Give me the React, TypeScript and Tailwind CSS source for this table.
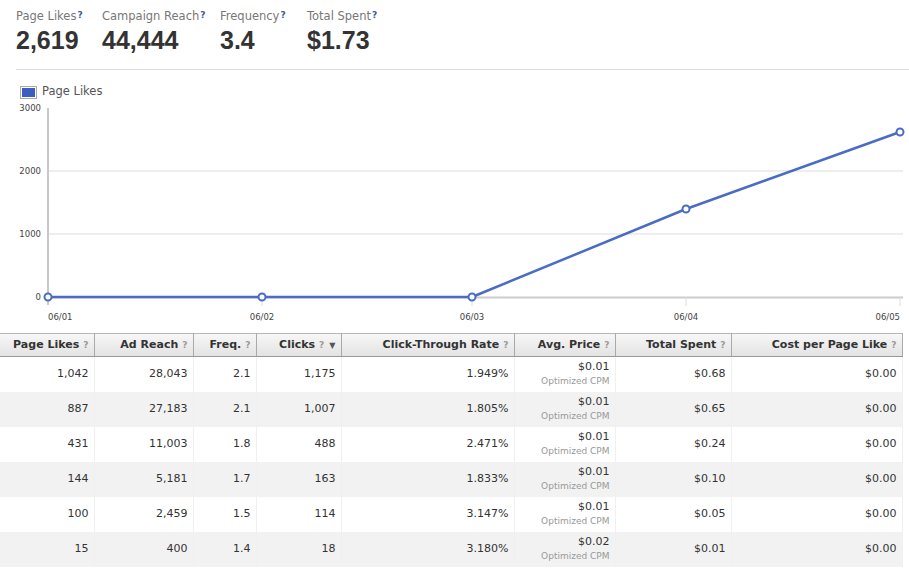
import React from "react";

const stats = [
  { label: "Page Likes", value: "2,619", w: "w-[86px]" },
  { label: "Campaign Reach", value: "44,444", w: "w-[118px]" },
  { label: "Frequency", value: "3.4", w: "w-[87px]" },
  { label: "Total Spent", value: "$1.73", w: "w-[100px]" },
];

const rows = [
  ["1,042", "28,043", "2.1", "1,175", "1.949%", "$0.01", "$0.68", "$0.00"],
  ["887", "27,183", "2.1", "1,007", "1.805%", "$0.01", "$0.65", "$0.00"],
  ["431", "11,003", "1.8", "488", "2.471%", "$0.01", "$0.24", "$0.00"],
  ["144", "5,181", "1.7", "163", "1.833%", "$0.01", "$0.10", "$0.00"],
  ["100", "2,459", "1.5", "114", "3.147%", "$0.01", "$0.05", "$0.00"],
  ["15", "400", "1.4", "18", "3.180%", "$0.02", "$0.01", "$0.00"],
];

const columns = [
  { name: "Page Likes", w: "w-[94px]" },
  { name: "Ad Reach", w: "w-[99px]" },
  { name: "Freq.", w: "w-[63px]" },
  { name: "Clicks", w: "w-[85px]", sort: true },
  { name: "Click-Through Rate", w: "w-[173px]" },
  { name: "Avg. Price", w: "w-[101px]" },
  { name: "Total Spent", w: "w-[116px]" },
  { name: "Cost per Page Like", w: "w-[171px]" },
];

// chart geometry (svg coords, svg starts at page y=100)
const X = [48, 262, 472, 686, 900];
const Y0 = 196;
const yFor = (v: number) => Y0 - (v / 3000) * 189;
const values = [0, 0, 0, 1397, 2619];

function Chart() {
  const pts = X.map((x, i) => `${x},${yFor(values[i])}`).join(" ");
  return (
    <svg width="909" height="226" className="block" style={{ fontFamily: "'DejaVu Sans', Verdana, sans-serif" }}>
      {[1000, 2000].map((v) => (
        <line key={v} x1="48" x2="903" y1={yFor(v)} y2={yFor(v)} stroke="#dddddd" strokeWidth="1" />
      ))}
      <line x1="48" x2="903" y1={Y0 + 0.5} y2={Y0 + 0.5} stroke="#cccccc" strokeWidth="2" />
      <line x1="48" x2="48" y1="7" y2="204" stroke="#c8c8c8" strokeWidth="2" />
      {X.slice(1).map((x) => (
        <line key={x} x1={x} x2={x} y1={Y0} y2={Y0 + 9} stroke="#dddddd" strokeWidth="1" />
      ))}
      {[0, 1000, 2000, 3000].map((v) => (
        <text key={v} x="41" y={yFor(v) + 3} textAnchor="end" fontSize="8.5" fill="#444">
          {v}
        </text>
      ))}
      {["06/01", "06/02", "06/03", "06/04", "06/05"].map((d, i) => (
        <text
          key={d}
          x={X[i]}
          y="219"
          fontSize="8.5"
          fill="#444"
          textAnchor={i === 0 ? "start" : i === 4 ? "end" : "middle"}
        >
          {d}
        </text>
      ))}
      <polyline points={pts} fill="none" stroke="#4a6cc4" strokeWidth="2.5" strokeLinejoin="round" />
      {X.map((x, i) => (
        <circle key={x} cx={x} cy={yFor(values[i])} r="3.5" fill="#fff" stroke="#4a6cc4" strokeWidth="2" />
      ))}
    </svg>
  );
}

function Help() {
  return <sup className="ml-[1px] text-[9px] font-bold text-[#3b5998] relative top-[-2px]">?</sup>;
}

export default function App() {
  return (
    <div className="w-[909px] h-[569px] overflow-hidden bg-white text-[#333]">
      {/* Summary stats */}
      <div className="flex pl-4 pt-[7px]">
        {stats.map((s) => (
          <div key={s.label} className={s.w}>
            <div className="text-[11.5px] leading-[18px] text-[#777] font-['DejaVu_Sans',Verdana,sans-serif]">
              {s.label}
              <Help />
            </div>
            <div className="font-['Liberation_Sans',Arial,sans-serif] text-[25px] leading-[30px] font-bold text-[#333]">
              {s.value}
            </div>
          </div>
        ))}
      </div>
      <div className="ml-4 mt-[14px] border-t border-[#dadada]" />

      {/* Legend */}
      <div className="flex items-center gap-[5px] pl-5 mt-[15px] h-[14px]">
        <div className="w-[17px] h-[13px] border border-[#aaa] p-[1px]">
          <div className="w-full h-full bg-[#3b5fc0]" />
        </div>
        <span className="text-[11.5px] text-[#555] font-['DejaVu_Sans',Verdana,sans-serif]">Page Likes</span>
      </div>

      <div className="mt-[2px]">
        <Chart />
      </div>

      {/* Table */}
      <table className="mt-[6px] table-fixed border-collapse text-[11px] font-['DejaVu_Sans',Verdana,sans-serif]">
        <thead>
          <tr className="h-[23px] bg-gradient-to-b from-[#f7f7f7] to-[#e2e2e2]">
            {columns.map((c) => (
              <th
                key={c.name}
                className={`${c.w} border-t border-t-[#b8b8b8] border-b border-b-[#999] border-r border-r-[#aaa] pr-[5px] text-right font-bold text-[#333] whitespace-nowrap`}
              >
                {c.name}
                <span className="ml-[4px] text-[9px] text-[#999]">?</span>
                {c.sort && <span className="ml-[5px] text-[8px] text-[#555]">▼</span>}
              </th>
            ))}
          </tr>
        </thead>
        <tbody>
          {rows.map((r, i) => (
            <tr key={i} className={`h-[35px] ${i % 2 === 1 ? "bg-[#f2f2f2]" : "bg-white"}`}>
              {r.map((v, j) => (
                <td key={j} className="border-r border-r-[#f0f0f0] pr-[5px] text-right text-[#333] leading-[14px]">
                  {j === 5 ? (
                    <div className="flex flex-col items-end">
                      <span>{v}</span>
                      <span className="text-[9px] text-[#999]">Optimized CPM</span>
                    </div>
                  ) : (
                    v
                  )}
                </td>
              ))}
            </tr>
          ))}
        </tbody>
      </table>
    </div>
  );
}
